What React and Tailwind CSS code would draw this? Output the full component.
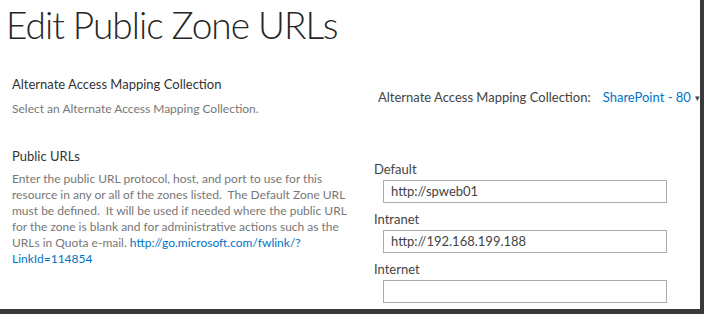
import React from "react";

const FONT = { fontFamily: 'Lato, "Open Sans", Arial, sans-serif' };

const Campo = ({ label, value }) => (
  <div className="flex flex-col">
    <div className="text-[13px] leading-[16px] text-[#444] pl-[14px]">{label}</div>
    <div className="ml-[23px] mt-[3px] mb-[8px] h-[23px] w-[284px] border border-[#ababab] bg-white px-[7px] text-[13px] leading-[21px] text-[#444]">
      {value}
    </div>
  </div>
);

export default function App() {
  return (
    <div className="w-[704px] h-[314px] bg-[#3a3a3a] overflow-hidden" style={FONT}>
      <div className="w-[700px] h-[309px] bg-white overflow-hidden">
        <h1 className="pl-[6px] pt-[2px] text-[37px] leading-[46px] font-light text-[#262626] tracking-[-1px]">
          Edit Public Zone URLs
        </h1>

        <div className="flex mt-[27px]">
          <div className="w-[360px] pl-[12px]">
            <div className="text-[13px] leading-[18px] text-[#333]">Alternate Access Mapping Collection</div>
            <div className="mt-[8px] text-[12px] leading-[16px] text-[#777]">
              Select an Alternate Access Mapping Collection.
            </div>
          </div>
          <div className="flex items-center pt-[4px] pl-[18px] whitespace-nowrap">
            <span className="text-[13px] text-[#444]">Alternate Access Mapping Collection:</span>
            <span className="ml-[12px] text-[13px] text-[#0072c6]">SharePoint - 80</span>
            <span className="ml-[4px] text-[9px] text-[#444]">▾</span>
          </div>
        </div>

        <div className="flex mt-[30px]">
          <div className="w-[360px] pl-[12px]">
            <div className="text-[13px] leading-[18px] text-[#333]">Public URLs</div>
            <p className="mt-[6px] w-[345px] text-[12px] leading-[16px] text-[#777] whitespace-nowrap">
              Enter the public URL protocol, host, and port to use for this
              <br />
              resource in any or all of the zones listed.&nbsp; The Default Zone URL
              <br />
              must be defined.&nbsp; It will be used if needed where the public URL
              <br />
              for the zone is blank and for administrative actions such as the
              <br />
              URLs in Quota e-mail. <span className="text-[#0072c6]">http://go.microsoft.com/fwlink/?</span>
              <br />
              <span className="text-[#0072c6]">LinkId=114854</span>
            </p>
          </div>
          <div className="pt-[14px]">
            <Campo label="Default" value="http://spweb01" />
            <Campo label="Intranet" value="http://192.168.199.188" />
            <Campo label="Internet" value="" />
          </div>
        </div>
      </div>
    </div>
  );
}
